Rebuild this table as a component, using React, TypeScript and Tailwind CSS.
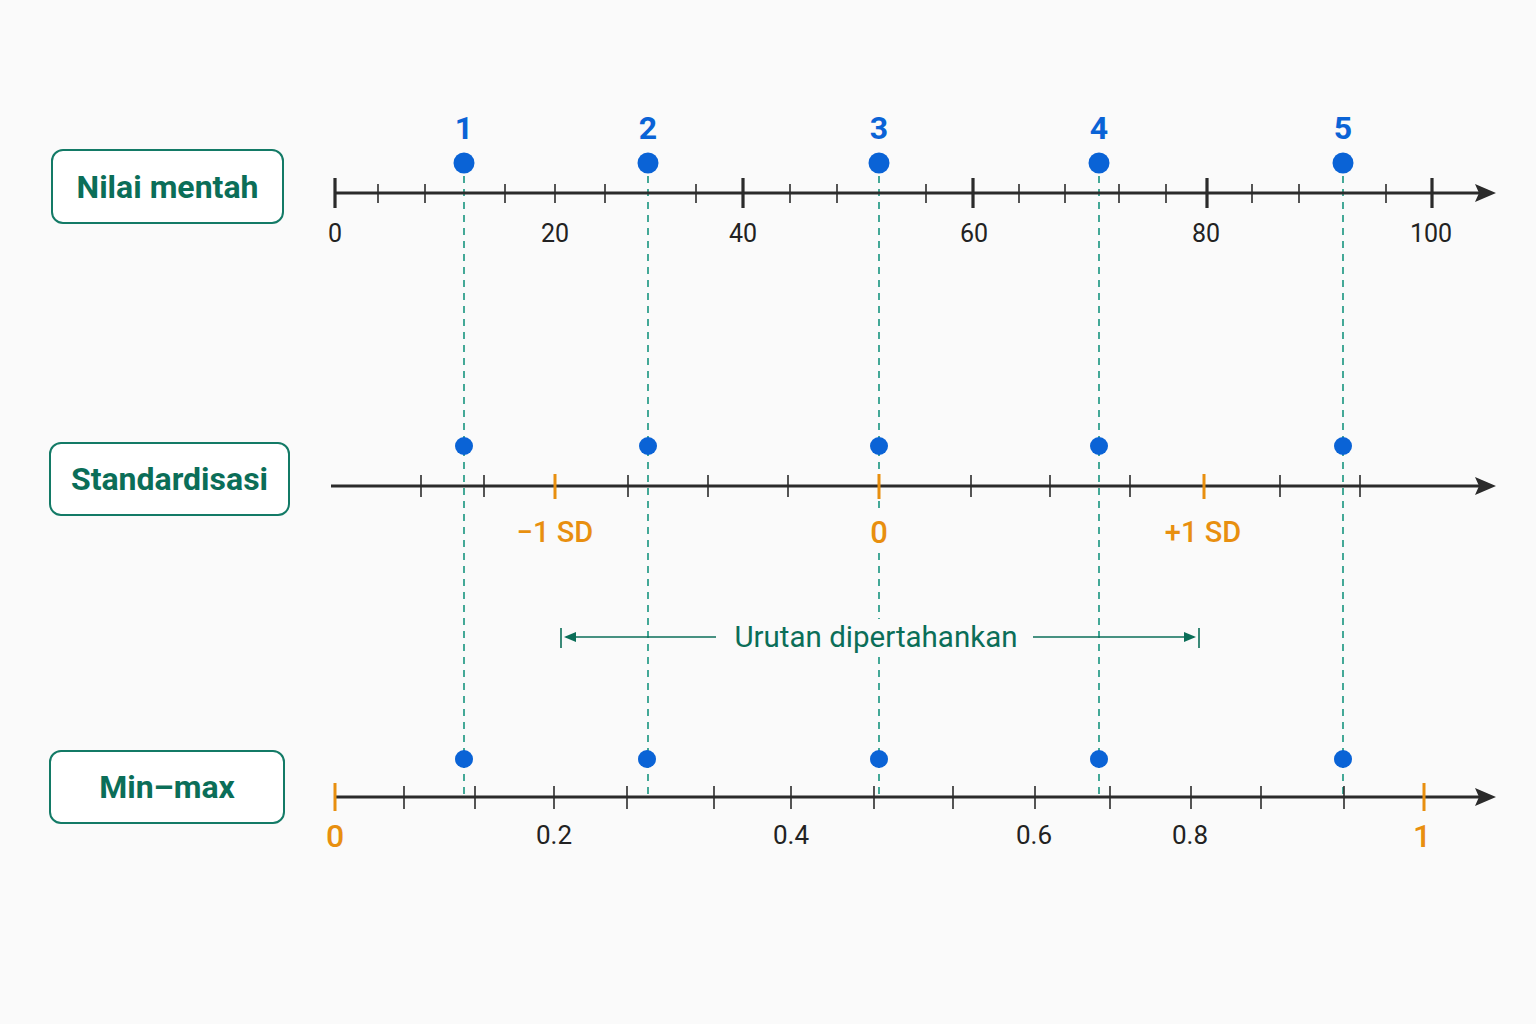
import React from "react";

const DARK = "#2b2b2b";
const ORANGE = "#e88f0f";
const BLUE = "#0a63d6";
const TEAL = "#17957f";
const GREEN = "#0b6e58";
const BG = "#fafafa";

const dotsX = [464, 648, 879, 1099, 1343];

function Arrow({ y, x0 }: { y: number; x0: number }) {
  return (
    <g>
      <line x1={x0} y1={y} x2={1480} y2={y} stroke={DARK} strokeWidth={3} />
      <path d={`M1496 ${y} L1475 ${y - 9} L1479 ${y} L1475 ${y + 9} Z`} fill={DARK} />
    </g>
  );
}

export default function App() {
  const ax1 = 193;
  const ax2 = 486;
  const ax3 = 797;
  const minor1 = [378, 425, 505, 555, 605, 696, 790, 837, 926, 1019, 1065, 1119, 1166, 1252, 1299, 1386];
  const major1 = [335, 743, 973, 1207, 1432];
  const labels1: [number, string][] = [
    [335, "0"],
    [555, "20"],
    [743, "40"],
    [974, "60"],
    [1206, "80"],
    [1431, "100"],
  ];
  const minor2 = [421, 484, 628, 708, 788, 971, 1050, 1130, 1280, 1360];
  const orange2 = [555, 879, 1204];
  const minor3 = [404, 475, 554, 627, 714, 791, 874, 953, 1035, 1110, 1191, 1261, 1344];
  const labels3: [number, string][] = [
    [554, "0.2"],
    [791, "0.4"],
    [1034, "0.6"],
    [1190, "0.8"],
  ];
  const font = "Roboto, 'Liberation Sans', sans-serif";

  return (
    <div
      className="relative w-[1536px] h-[1024px] overflow-hidden bg-[#fafafa]"
      style={{ fontFamily: font }}
    >
      <svg
        className="absolute inset-0"
        width={1536}
        height={1024}
        viewBox="0 0 1536 1024"
        style={{ fontFamily: font }}
      >
        {/* dashed guides */}
        {dotsX.map((x) => (
          <line
            key={"d" + x}
            x1={x}
            y1={176}
            x2={x}
            y2={797}
            stroke={TEAL}
            strokeWidth={1.6}
            strokeDasharray="7 6"
          />
        ))}
        {/* gaps behind text */}
        <rect x={866} y={514} width={26} height={36} fill={BG} />
        <rect x={724} y={619} width={302} height={38} fill={BG} />

        {/* Axis 1 */}
        <Arrow y={ax1} x0={335} />
        {minor1.map((x) => (
          <line key={"m1" + x} x1={x} y1={ax1 - 9} x2={x} y2={ax1 + 10} stroke={DARK} strokeWidth={1.6} />
        ))}
        {major1.map((x) => (
          <line key={"M1" + x} x1={x} y1={ax1 - 15} x2={x} y2={ax1 + 15} stroke={DARK} strokeWidth={3.2} />
        ))}
        {labels1.map(([x, t]) => (
          <text key={"l1" + t} x={x} y={242} textAnchor="middle" fontSize={25} fill="#222">
            {t}
          </text>
        ))}
        {dotsX.map((x, i) => (
          <g key={"t" + x}>
            <circle cx={x} cy={163} r={10.5} fill={BLUE} />
            <text x={x} y={139} textAnchor="middle" fontSize={32} fontWeight={700} fill={BLUE}>
              {i + 1}
            </text>
          </g>
        ))}

        {/* Axis 2 */}
        <Arrow y={ax2} x0={331} />
        {minor2.map((x) => (
          <line key={"m2" + x} x1={x} y1={ax2 - 11} x2={x} y2={ax2 + 11} stroke={DARK} strokeWidth={1.6} />
        ))}
        {orange2.map((x) => (
          <line key={"o2" + x} x1={x} y1={ax2 - 12} x2={x} y2={ax2 + 13} stroke={ORANGE} strokeWidth={3} />
        ))}
        {dotsX.map((x) => (
          <circle key={"c2" + x} cx={x} cy={446} r={9} fill={BLUE} />
        ))}
        <text x={555} y={542} textAnchor="middle" fontSize={29} fontWeight={500} fill={ORANGE}>
          −1 SD
        </text>
        <text x={879} y={543} textAnchor="middle" fontSize={31} fontWeight={500} fill={ORANGE}>
          0
        </text>
        <text x={1203} y={542} textAnchor="middle" fontSize={29} fontWeight={500} fill={ORANGE}>
          +1 SD
        </text>

        {/* Urutan dipertahankan */}
        <g stroke={GREEN} strokeWidth={1.6}>
          <line x1={561} y1={628} x2={561} y2={648} />
          <line x1={566} y1={637} x2={716} y2={637} />
          <line x1={1033} y1={637} x2={1194} y2={637} />
          <line x1={1199} y1={628} x2={1199} y2={648} />
        </g>
        <path d="M564 637 L576 632 L576 642 Z" fill={GREEN} />
        <path d="M1196 637 L1184 632 L1184 642 Z" fill={GREEN} />
        <text x={876} y={647} textAnchor="middle" fontSize={29.5} fill={GREEN}>
          Urutan dipertahankan
        </text>

        {/* Axis 3 */}
        <Arrow y={ax3} x0={335} />
        {minor3.map((x) => (
          <line key={"m3" + x} x1={x} y1={ax3 - 11} x2={x} y2={ax3 + 12} stroke={DARK} strokeWidth={1.6} />
        ))}
        <line x1={335} y1={ax3 - 14} x2={335} y2={ax3 + 14} stroke={ORANGE} strokeWidth={3} />
        <line x1={1424} y1={ax3 - 14} x2={1424} y2={ax3 + 14} stroke={ORANGE} strokeWidth={3} />
        {dotsX.map((x) => (
          <circle key={"c3" + x} cx={x === 648 ? 647 : x} cy={759} r={9} fill={BLUE} />
        ))}
        {labels3.map(([x, t]) => (
          <text key={"l3" + t} x={x} y={844} textAnchor="middle" fontSize={26} fill="#222">
            {t}
          </text>
        ))}
        <text x={335} y={847} textAnchor="middle" fontSize={32} fontWeight={500} fill={ORANGE}>
          0
        </text>
        <text x={1422} y={847} textAnchor="middle" fontSize={32} fontWeight={500} fill={ORANGE}>
          1
        </text>
      </svg>

      <div className="relative flex flex-col items-start pl-[49px] pt-[149px]">
        <div className="ml-[2px] flex h-[75px] w-[233px] items-center justify-center rounded-[12px] border-2 border-[#137a66] bg-white">
          <span className="text-[32px] font-bold leading-none text-[#0b6e58]">Nilai mentah</span>
        </div>
        <div className="mt-[218px] flex h-[74px] w-[241px] items-center justify-center rounded-[12px] border-2 border-[#137a66] bg-white">
          <span className="text-[32px] font-bold leading-none text-[#0b6e58]">Standardisasi</span>
        </div>
        <div className="mt-[234px] flex h-[74px] w-[236px] items-center justify-center rounded-[12px] border-2 border-[#137a66] bg-white">
          <span className="text-[32px] font-bold leading-none text-[#0b6e58]">Min–max</span>
        </div>
      </div>
    </div>
  );
}
